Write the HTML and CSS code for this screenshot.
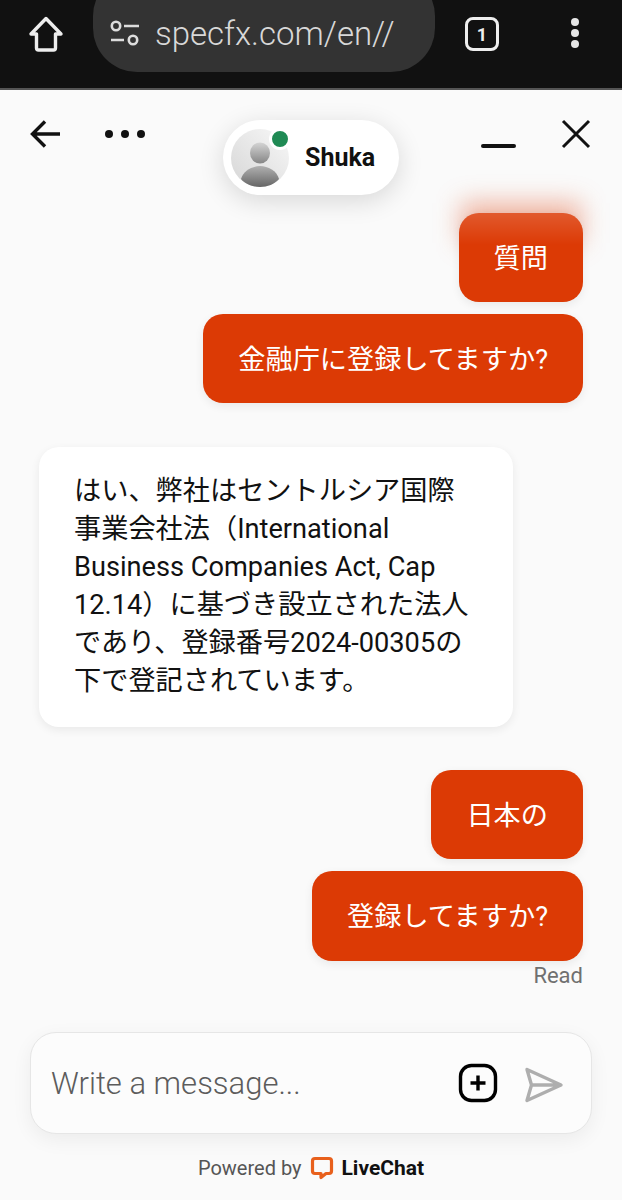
FILE: index.html
```html
<!DOCTYPE html>
<html lang="ja">

<head>
    <meta charset="UTF-8">
    <meta name="viewport" content="width=device-width, initial-scale=1.0">
    <title>LiveChat</title>
    <link rel="stylesheet" href="styles.css">
</head>

<body>
    <div class="browser-bar">
        <svg class="home-icon" width="38" height="38" viewBox="0 0 38 38" fill="none" stroke="#eee" stroke-width="3.4" stroke-linejoin="round">
            <path d="M19 3.5 L34 19 L28.5 19 L28.5 33 Q28.5 35 26.5 35 L11.5 35 Q9.5 35 9.5 33 L9.5 19 L4 19 Z" />
        </svg>
        <div class="url-pill">
            <svg width="32" height="28" viewBox="0 0 32 28" fill="none" stroke="#ddd" stroke-width="2.6">
                <circle cx="7" cy="7" r="4.2" />
                <circle cx="24" cy="21" r="4.2" />
                <path d="M15 7 H30 M2 21 H15" />
            </svg>
            <span class="url-text">specfx.com/en//</span>
        </div>
        <div class="tab-count">1</div>
        <div class="kebab"><i></i><i></i><i></i></div>
    </div>

    <div class="chat">
        <div class="chat-head">
            <div class="head-left">
                <svg width="32" height="32" viewBox="0 0 32 32" fill="none" stroke="#111" stroke-width="3.4">
                    <path d="M30 16 H3 M15 3.5 L2.5 16 L15 28.5" />
                </svg>
                <div class="dots"><i></i><i></i><i></i></div>
            </div>
            <div class="agent-pill">
                <div class="avatar">
                    <svg width="58" height="58" viewBox="0 0 58 58">
                        <defs>
                            <linearGradient id="avatarBg" x1="1" y1="0" x2="0" y2="1">
                                <stop offset="0" stop-color="#f8f8f8" />
                                <stop offset="1" stop-color="#d6d6d6" />
                            </linearGradient>
                            <linearGradient id="head" x1="0" y1="0" x2="0" y2="1">
                                <stop offset="0" stop-color="#d4d4d4" />
                                <stop offset="1" stop-color="#868686" />
                            </linearGradient>
                            <linearGradient id="body" x1="0" y1="0" x2="0" y2="1">
                                <stop offset="0" stop-color="#b0b0b0" />
                                <stop offset="1" stop-color="#666" />
                            </linearGradient>
                        </defs>
                        <circle cx="29" cy="29" r="29" fill="url(#avatarBg)" />
                        <ellipse cx="29" cy="24" rx="10" ry="10.5" fill="url(#head)" />
                        <path d="M10 50 C12 42 21 37 29 37 C37 37 46 42 48 50 C44 55 36 58 29 58 C22 58 14 55 10 50 Z" fill="url(#body)" />
                    </svg>
                    <span class="online-dot"></span>
                </div>
                <span class="agent-name">Shuka</span>
            </div>
            <div class="head-right">
                <span class="minimize"></span>
                <svg width="30" height="30" viewBox="0 0 30 30" fill="none" stroke="#111" stroke-width="3">
                    <path d="M2 2 L28 28 M28 2 L2 28" />
                </svg>
            </div>
        </div>

        <div class="messages">
            <div class="bubble out first">質問</div>
            <div class="bubble out">金融庁に登録してますか?</div>
            <div class="bubble in">はい、弊社はセントルシア国際事業会社法（International Business Companies Act, Cap 12.14）に基づき設立された法人であり、登録番号2024-00305の下で登記されています。</div>
            <div class="bubble out group">日本の</div>
            <div class="bubble out last">登録してますか?</div>
            <div class="read">Read</div>
        </div>

        <div class="composer">
            <span class="placeholder">Write a message...</span>
            <svg class="plus-icon" width="40" height="40" viewBox="0 0 40 40" fill="none" stroke="#000" stroke-width="3.4">
                <rect x="2.5" y="2.5" width="35" height="35" rx="11" />
                <path d="M20 12.5 V27.5 M12.5 20 H27.5" />
            </svg>
            <svg class="send-icon" width="40" height="36" viewBox="0 0 40 36" fill="none" stroke="#aeaeae" stroke-width="3.4" stroke-linejoin="round">
                <path d="M3 2.5 L37 18 L3 33.5 L7.5 18 Z M7.5 18 H37" />
            </svg>
        </div>

        <div class="powered">
            <span>Powered by</span>
            <svg width="24" height="24" viewBox="0 0 24 24" fill="none" stroke="#e8601c" stroke-width="3.2" stroke-linejoin="round">
                <path d="M5 2.5 H19 Q21.5 2.5 21.5 5 V15 Q21.5 17.5 19 17.5 H16 L11 21.5 V17.5 H5 Q2.5 17.5 2.5 15 V5 Q2.5 2.5 5 2.5 Z" />
            </svg>
            <b>LiveChat</b>
        </div>
    </div>
</body>

</html>
```
FILE: styles.css
```css
* {
    box-sizing: border-box;
}

body {
    margin: 0;
    width: 622px;
    height: 1200px;
    overflow: hidden;
    background-color: #fafafa;
    font-family: Roboto, "Noto Sans CJK JP", sans-serif;
    color: #111;
}

.browser-bar {
    height: 90px;
    background-color: #111;
    border-bottom: 2px solid #555;
    display: flex;
    align-items: flex-start;
    overflow: hidden;
}

.home-icon {
    margin: 15px 0 0 27px;
}

.url-pill {
    width: 342px;
    height: 100px;
    margin: -28px 0 0 28px;
    padding: 22px 0 0 16px;
    background-color: #333;
    border-radius: 44px;
    display: flex;
    align-items: center;
    gap: 14px;
}

.url-text {
    color: #d8d8d8;
    font-size: 33px;
    font-weight: 300;
}

.tab-count {
    width: 34px;
    height: 34px;
    margin: 17px 0 0 30px;
    border: 3px solid #eee;
    border-radius: 8px;
    color: #eee;
    font-size: 18px;
    font-weight: 700;
    display: flex;
    align-items: center;
    justify-content: center;
}

.kebab {
    margin: 18px 0 0 72px;
    display: flex;
    flex-direction: column;
    gap: 3px;
}

.kebab i {
    width: 8px;
    height: 8px;
    border-radius: 50%;
    background-color: #e6e6e6;
}

.chat {
    height: 1110px;
    display: flex;
    flex-direction: column;
}

.chat-head {
    height: 123px;
    position: relative;
    display: flex;
    justify-content: space-between;
    padding: 0 31px 0 30px;
}

.head-left {
    display: flex;
    align-items: center;
    gap: 43px;
    height: 88px;
}

.dots {
    display: flex;
    gap: 8px;
}

.dots i {
    width: 8px;
    height: 8px;
    border-radius: 50%;
    background-color: #111;
}

.agent-pill {
    position: absolute;
    top: 30px;
    left: 223px;
    z-index: 2;
    width: 176px;
    height: 75px;
    padding-left: 8px;
    background-color: #fff;
    border-radius: 38px;
    box-shadow: 0 6px 26px rgba(0, 0, 0, 0.14);
    display: flex;
    align-items: center;
    gap: 16px;
}

.avatar {
    position: relative;
    width: 58px;
    height: 58px;
}

.avatar svg {
    display: block;
}

.online-dot {
    position: absolute;
    top: -1px;
    right: -2px;
    width: 22px;
    height: 22px;
    border: 3px solid #fff;
    border-radius: 50%;
    background-color: #1f8a54;
}

.agent-name {
    font-size: 25px;
    font-weight: 700;
}

.head-right {
    display: flex;
    align-items: flex-start;
    gap: 45px;
    padding-top: 29px;
}

.minimize {
    width: 35px;
    height: 4px;
    margin-top: 25px;
    background-color: #111;
    border-radius: 2px;
}

.messages {
    flex: 1;
    padding: 0 39px;
    display: flex;
    flex-direction: column;
    align-items: flex-end;
}

.bubble {
    font-size: 27.2px;
    border-radius: 20px;
    box-shadow: 0 3px 10px rgba(0, 0, 0, 0.07);
}

.out {
    height: 89px;
    padding: 0 35px 4px;
    margin-bottom: 12px;
    background-color: #dc3a05;
    color: #fff;
    display: flex;
    align-items: center;
    flex-shrink: 0;
}

.last {
    height: 90px;
}

.first {
    position: relative;
}

.first::before {
    content: "";
    position: absolute;
    left: 2px;
    right: 2px;
    top: -10px;
    height: 40px;
    background-color: rgba(220, 58, 5, 0.38);
    filter: blur(13px);
    z-index: -1;
}

.first::after {
    content: "";
    position: absolute;
    left: 0;
    right: 0;
    top: 0;
    height: 32px;
    border-radius: 20px 20px 0 0;
    background: linear-gradient(rgba(255, 255, 255, 0.16), rgba(255, 255, 255, 0));
}

.in {
    align-self: flex-start;
    width: 474px;
    margin-top: 32px;
    padding: 25px 35px 27px;
    line-height: 38px;
    background-color: #fff;
    color: #111;
}

.group {
    margin-top: 43px;
}

.read {
    margin-top: -10px;
    font-size: 22px;
    color: #707070;
}

.composer {
    height: 102px;
    margin: 0 30px;
    padding: 0 27px 0 20px;
    background-color: #fcfcfc;
    border: 1px solid #e6e6e6;
    border-radius: 26px;
    box-shadow: 0 6px 20px rgba(0, 0, 0, 0.06);
    display: flex;
    align-items: center;
}

.placeholder {
    flex: 1;
    font-size: 31px;
    font-weight: 300;
    color: #5c5c5c;
}

.plus-icon {
    margin-right: -1px;
}

.send-icon {
    margin: 4px 0 0 27px;
}

.powered {
    height: 66px;
    padding-top: 2px;
    display: flex;
    align-items: center;
    justify-content: center;
    gap: 9px;
    font-size: 20px;
    color: #555;
}

.powered b {
    margin-left: -2px;
    font-size: 21px;
    color: #111;
}
```
